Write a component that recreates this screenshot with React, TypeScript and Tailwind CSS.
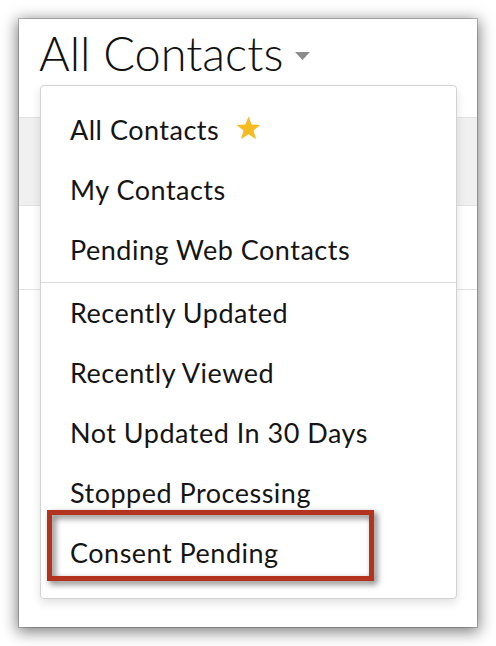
import React from "react";

const sectionOne = ["All Contacts", "My Contacts", "Pending Web Contacts"];
const sectionTwo = [
  "Recently Updated",
  "Recently Viewed",
  "Not Updated In 30 Days",
  "Stopped Processing",
  "Consent Pending",
];

function Star() {
  return (
    <svg width="25" height="24" viewBox="0 0 24 23" className="ml-[17px] mt-[-4px]">
      <polygon
        points="12,0.5 15,8.2 23.5,8.6 16.8,13.9 19.2,22.3 12,17.4 4.8,22.3 7.2,13.9 0.5,8.6 9,8.2"
        fill="#f5bb23"
      />
    </svg>
  );
}

function Item({ label, star }: { label: string; star?: boolean }) {
  return (
    <div className="flex h-[60px] items-center pl-[29px] text-[27px] leading-[60px] tracking-[0.5px] text-[#151515]">
      <span>{label}</span>
      {star && <Star />}
    </div>
  );
}

export default function App() {
  return (
    <div
      className="h-[646px] w-[496px] bg-white pl-[19px] pt-[19px]"
      style={{ fontFamily: "Lato, 'Open Sans', sans-serif" }}
    >
      <div className="relative h-[608px] w-[458px] bg-white shadow-[0_0_0_1px_rgba(0,0,0,0.2),0_3px_14px_2px_rgba(0,0,0,0.5)]">
        <div className="flex h-[98px] items-start pl-[20px] pt-[10px]">
          <span className="text-[47px] font-light leading-[48px] text-[#111]">All Contacts</span>
          <svg width="15" height="8" viewBox="0 0 15 8" className="ml-[12px] mt-[23px]">
            <polygon points="0,0 15,0 7.5,8" fill="#8c8c8c" />
          </svg>
        </div>
        <div className="h-[89px] border-y border-[#e2e2e2] bg-[#f0f0f0]" />
        <div className="h-[84px] border-b border-[#e2e2e2]" />

        <div className="absolute left-[21px] top-[66px] w-[417px] rounded-[4px] border border-[#d3d3d3] bg-white pb-[15px] pt-[14px] shadow-[0_4px_10px_rgba(0,0,0,0.12)]">
          <div className="pb-[2px]">
            {sectionOne.map((s, i) => (
              <Item key={s} label={s} star={i === 0} />
            ))}
          </div>
          <div className="border-t border-[#dcdcdc]">
            {sectionTwo.map((s) => (
              <Item key={s} label={s} />
            ))}
          </div>
          <div className="absolute left-[6px] top-[424px] h-[71px] w-[327px] border-[5px] border-[#b3331f] [filter:drop-shadow(3px_3px_3px_rgba(0,0,0,0.55))]" />
        </div>
      </div>
    </div>
  );
}
